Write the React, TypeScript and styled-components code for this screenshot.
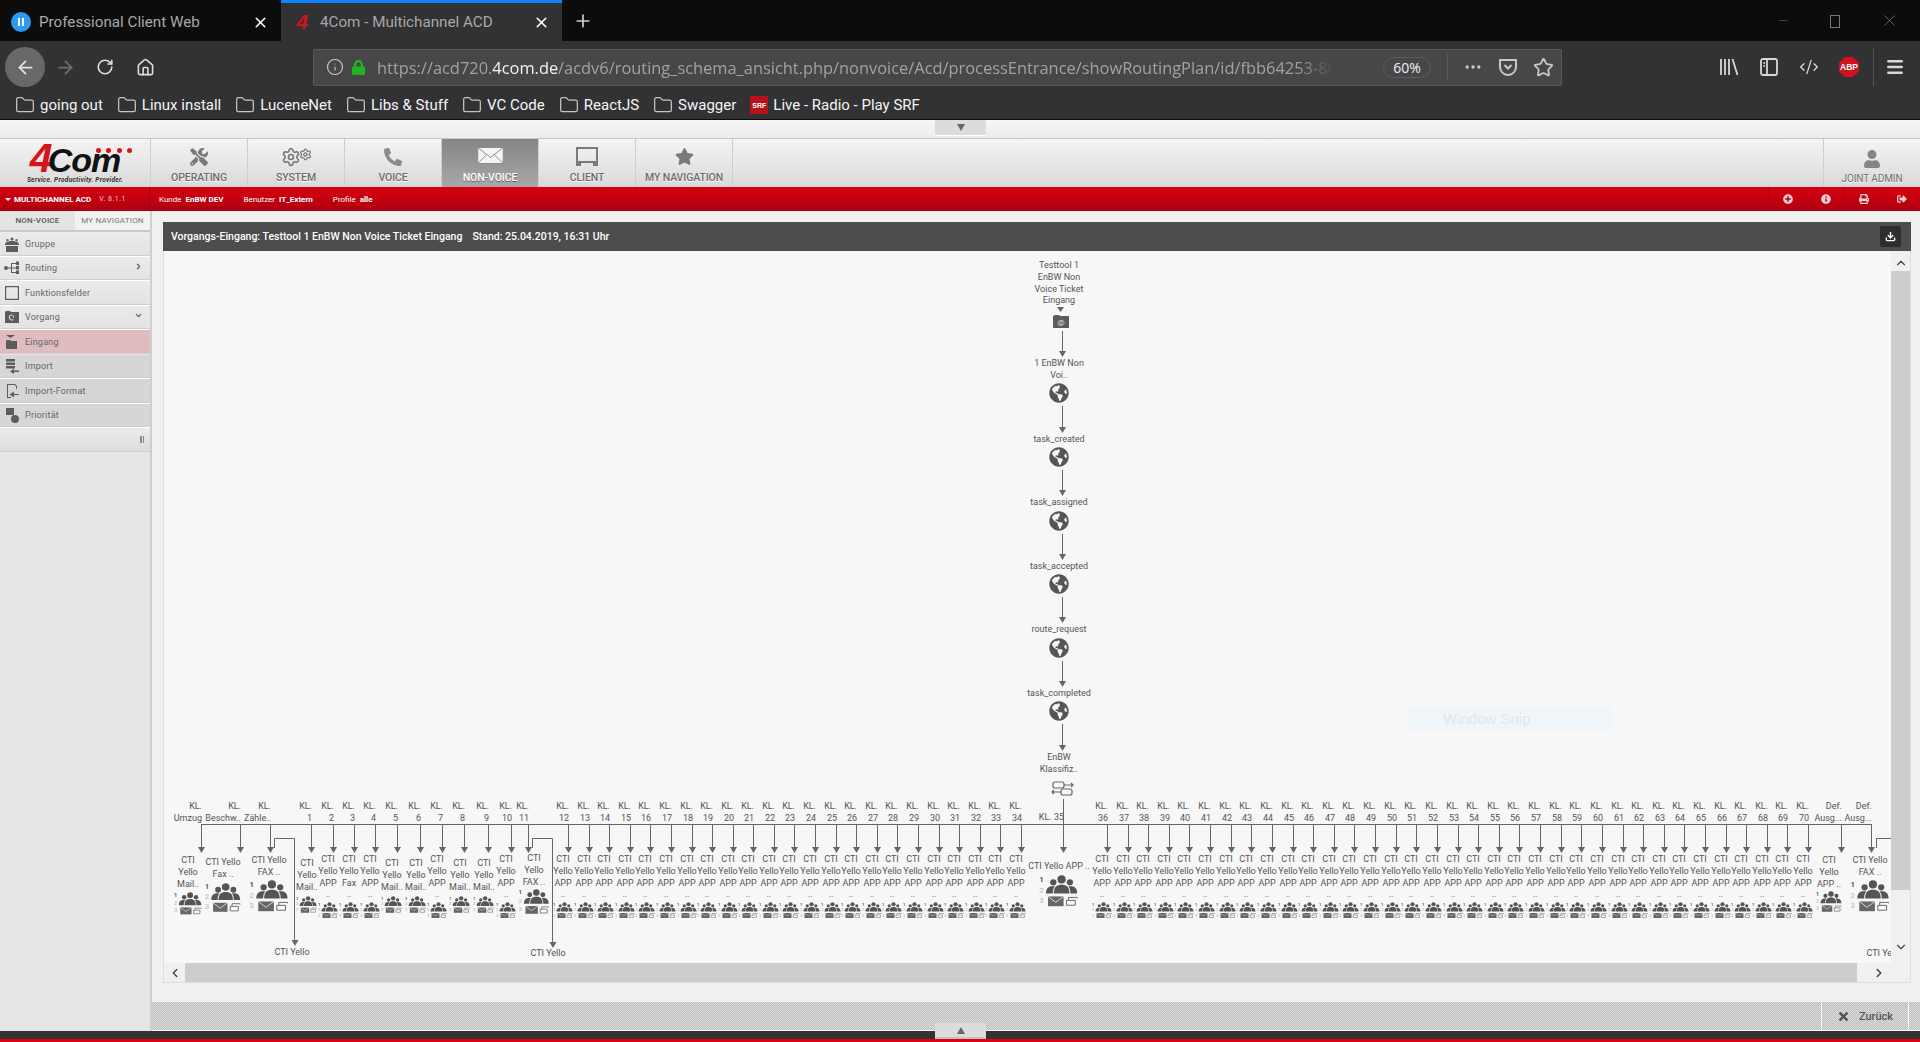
import React from "react";
import styled, { createGlobalStyle } from "styled-components";
import {
  ArrowLeft, ArrowRight, RotateCw, Home, Info, MoreHorizontal, Star, Code2, Menu, Plus, X, Folder,
  Minus, ChevronRight, ChevronLeft, ChevronDown, ChevronUp, Download, Settings,
} from "lucide-react";
import { FaGlobeAmericas, FaTools, FaPhoneAlt, FaStar, FaUser, FaTimes, FaLock, FaPlusCircle, FaInfoCircle, FaPrint, FaSignOutAlt } from "react-icons/fa";

const Global = createGlobalStyle`
  html, body { margin: 0; padding: 0; height: 100%; overflow: hidden; background: #f0f0f0; }
  * { box-sizing: border-box; }
  #root { height: 100%; }
`;

const Page = styled.div`
  width: 1920px; height: 1042px; display: flex; flex-direction: column; overflow: hidden;
  font-family: "Roboto", "Liberation Sans", sans-serif;
`;

/* ---------- browser chrome ---------- */
const TabStrip = styled.div`height: 41px; background: #0c0c0c; display: flex; align-items: stretch; position: relative; flex: none;`;
const Tab = styled.div<{ $active?: boolean }>`
  width: 281px; display: flex; align-items: center; padding-left: 11px; position: relative;
  font: 15.2px "Roboto", sans-serif; color: #a8a8a8; white-space: nowrap;
  background: ${p => (p.$active ? "#323234" : "transparent")};
  border-top: 3px solid ${p => (p.$active ? "#0a84ff" : "transparent")};
`;
const TabTitle = styled.span`margin-left: 8px; flex: 1;`;
const TabClose = styled(X)`color: #fff; margin-right: 12px; flex: none;`;
const Favicon = styled.span`
  width: 20px; height: 20px; border-radius: 50%; background: #2f9bf0; display: flex; align-items: center; justify-content: center; gap: 2px; flex: none;
`;
const PauseBar = styled.i`width: 2px; height: 8px; background: #fff; display: block;`;
const RedFour = styled.span`
  width: 20px; text-align: center; font: italic 900 21px "Liberation Sans", sans-serif; color: #d2141c; flex: none;
`;
const NewTab = styled.div`width: 42px; display: flex; align-items: center; justify-content: center; color: #cfcfcf;`;
const WindowControls = styled.div`margin-left: auto; display: flex; align-items: center; gap: 40px; padding-right: 21px; color: #777;`;
const Restore = styled.span`width: 10px; height: 13px; border: 1px solid #777; display: block; position: relative; top: 1px;`;

const Toolbar = styled.div`height: 52px; background: #323234; display: flex; align-items: center; padding-left: 5px; flex: none;`;
const BackBtn = styled.div`width: 40px; height: 40px; border-radius: 50%; background: #68686a; color: #e4e4e4; display: flex; align-items: center; justify-content: center;`;
const NavIcon = styled.div<{ $dim?: boolean }>`width: 40px; display: flex; align-items: center; justify-content: center; color: ${p => (p.$dim ? "#6e6e70" : "#dcdcdc")};`;
const UrlBar = styled.div`
  margin-left: 148px; width: 1249px; height: 37px; background: #474749; border: 1px solid #5a5a5c; border-radius: 2px;
  display: flex; align-items: center; padding-left: 12px; color: #c8c8c8; flex: none;
`;
const UrlText = styled.div`
  margin-left: 11px; width: 957px; overflow: hidden; white-space: nowrap; font: 16.4px "Open Sans", sans-serif; color: #a2a2a4;
  mask-image: linear-gradient(to right, #000 96%, transparent);
  b { font-weight: 400; color: #f2f2f2; }
`;
const Zoom = styled.div`
  margin-left: 49px; width: 48px; height: 21px; border: 1px solid #5c5c5e; border-radius: 11px; color: #f0f0f0;
  font: 14px "Open Sans", sans-serif; display: flex; align-items: center; justify-content: center;
`;
const UrlSep = styled.div`width: 1px; height: 26px; background: #5c5c5e; margin: 0 15px 0 16px;`;
const UrlIcons = styled.div`display: flex; align-items: center; gap: 15px; color: #c9c9c9;`;
const ToolRight = styled.div`margin-left: auto; display: flex; align-items: center; gap: 20px; padding-right: 15px; color: #d8d8d8;`;
const ToolSep = styled.div`width: 1px; height: 38px; background: #555; margin: 0 -9px 0 -6px;`;
const Abp = styled.div`
  width: 20px; height: 20px; background: #d1121c; color: #fff; font: 700 8.5px "Liberation Sans", sans-serif; display: flex; align-items: center; justify-content: center;
  clip-path: polygon(30% 0, 70% 0, 100% 30%, 100% 70%, 70% 100%, 30% 100%, 0 70%, 0 30%);
`;

const Bookmarks = styled.div`
  height: 27px; background: #323234; border-bottom: 1px solid #0c0c0c; display: flex; align-items: center; padding: 0 0 2px 15px; gap: 14px; flex: none;
`;
const Bookmark = styled.div`display: flex; align-items: center; gap: 5px; color: #f4f4f4; font: 15px "Roboto", sans-serif; white-space: nowrap;`;
const FolderIcon = styled(Folder)`color: #c4c4c4; flex: none;`;
const SrfMark = styled.span`width: 18px; height: 18px; background: #b5121b; color: #fff; font: 700 7px "Liberation Sans", sans-serif; display: flex; align-items: center; justify-content: center;`;

/* ---------- app header ---------- */
const TopStrip = styled.div`
  height: 19px; background: linear-gradient(#f6f6f6, #ececec); border-bottom: 1px solid #c8c8c8; position: relative; flex: none;
`;
const Handle = styled.div<{ $bottom?: boolean }>`
  position: absolute; left: 935px; width: 51px; height: 16px; background: #dcdcdc; display: flex; align-items: center; justify-content: center;
  ${p => (p.$bottom ? "top: -8px; border-bottom: 2px solid #c4c4c4;" : "top: 0; border-bottom: 1px solid #fff;")}
`;
const HandleMark = styled.span<{ $up?: boolean }>`
  width: 0; height: 0; border-left: 4px solid transparent; border-right: 4px solid transparent; display: block;
  ${p => (p.$up ? "border-bottom: 7px solid #666;" : "border-top: 7px solid #666;")}
`;

const NavBar = styled.div`height: 48px; display: flex; background: linear-gradient(#f4f4f4, #d9d9d9); flex: none;`;
const LogoCell = styled.div`width: 151px; border-right: 1px solid #cfcfcf; position: relative; display: flex; flex-direction: column; align-items: center; flex: none;`;
const LogoWord = styled.div`
  font: italic 900 34px/32px "Liberation Sans", sans-serif; color: #111; letter-spacing: -1px; margin-top: 3px; position: relative; white-space: nowrap;
  span { color: #d7141c; font-size: 41px; letter-spacing: -5px; }
`;
const LogoDots = styled.div`position: absolute; top: 6px; left: 66px; display: flex; gap: 5.5px;`;
const LogoDot = styled.i`width: 5px; height: 5px; border-radius: 50%; background: #d7141c; display: block;`;
const LogoTag = styled.div`font: italic 700 6.6px "Roboto", sans-serif; color: #333; letter-spacing: .25px; margin-top: 0;`;
const NavItem = styled.div<{ $active?: boolean }>`
  width: 97px; display: flex; flex-direction: column; align-items: center; justify-content: flex-end; padding-bottom: 3px; gap: 5px; flex: none;
  border-right: 1px solid #cfcfcf; color: ${p => (p.$active ? "#fff" : "#6c6c6c")};
  background: ${p => (p.$active ? "linear-gradient(#858585, #a8a8a8)" : "transparent")};
  font: 500 10.5px "Roboto", sans-serif; letter-spacing: -.1px; text-shadow: ${p => (p.$active ? "0 1px 0 #666" : "0 1px 0 #fff")};
`;
const GearPair = styled.div`display: flex; align-items: center; height: 18px; color: #7a7a7a; gap: 0;`;
const Spacer = styled.div`flex: 1;`;
const JointItem = styled(NavItem)`border-right: 0; border-left: 1px solid #cfcfcf; font-weight: 400; font-size: 10px;`;

const RedBar = styled.div`height: 24px; display: flex; align-items: center; background: linear-gradient(#d8000f, #ad0010); color: #fff; flex: none;`;
const AppTitle = styled.div`
  width: 150px; height: 100%; padding-left: 5px; display: flex; align-items: center; gap: 3px; border-right: 1px solid #a30010; flex: none;
  font: 700 8px "Roboto", sans-serif; white-space: nowrap;
  em { font-style: normal; font-weight: 400; margin-left: 5px; color: #f2c8cc; font-size: 7px; letter-spacing: .5px; }
`;
const Caret = styled.i`width: 0; height: 0; border-left: 3px solid transparent; border-right: 3px solid transparent; border-top: 3px solid #fff; display: block;`;
const MetaRow = styled.div`display: flex; gap: 20px; margin-left: 9px;`;
const Meta = styled.div`font: 400 8px "Roboto", sans-serif; white-space: nowrap; b { font-weight: 700; margin-left: 4px; }`;
const RedActions = styled.div`margin-left: auto; display: flex; height: 100%;`;
const RedAction = styled.div`width: 38px; display: flex; align-items: center; justify-content: center; border-left: 1px solid #b80010; color: #f0d0d0;`;

/* ---------- body ---------- */
const Body = styled.div`flex: 1; display: flex; min-height: 0;`;
const Sidebar = styled.aside`width: 152px; background: #e6e6e6; border-right: 2px solid #cfcfcf; flex: none;`;
const SideTabs = styled.div`display: flex; height: 21px; border-bottom: 2px solid #c9c9c9;`;
const SideTab = styled.div<{ $active?: boolean }>`
  width: 75px; display: flex; align-items: center; justify-content: center; font: ${p => (p.$active ? 500 : 400)} 8px "Roboto", sans-serif;
  color: ${p => (p.$active ? "#555" : "#777")}; background: ${p => (p.$active ? "#e4e4e4" : "#f2f2f2")}; letter-spacing: .2px;
`;
const SideItem = styled.div<{ $tone?: "pink" | "sub" }>`
  height: 24.5px; display: flex; align-items: center; padding-left: 4px; gap: 5px; position: relative;
  border-bottom: 1px solid #fff; border-bottom-color: ${p => (p.$tone === "pink" ? "#f0e4e6" : "#fff")};
  box-shadow: inset 0 -1px 0 #cfcfcf;
  background: ${p => (p.$tone === "pink" ? "#dfbcc0" : p.$tone === "sub" ? "#d6d6d6" : "linear-gradient(#ebebeb,#e2e2e2)")};
  font: 9px "Roboto", sans-serif; color: #666; letter-spacing: .2px;
`;
const SideIcon = styled.svg`width: 16px; height: 16px; flex: none; color: #5c5c5c;`;
const SideChevron = styled.span`position: absolute; right: 7px; top: 5px; color: #555; display: flex;`;
const Collapse = styled.div`
  height: 24px; background: linear-gradient(#ececec, #dcdcdc); border-bottom: 1px solid #cfcfcf; display: flex; align-items: center; justify-content: flex-end; padding-right: 6px; gap: 1px;
`;
const CollapseBar = styled.i`width: 1.5px; height: 7px; background: #888; display: block;`;

const Main = styled.main`flex: 1; display: flex; flex-direction: column; min-width: 0; background: #f0f0f0;`;
const Content = styled.div`flex: 1; min-height: 0; padding: 11px 9px 19px 11px; display: flex; flex-direction: column;`;
const PanelHeader = styled.div`
  height: 29px; background: #4d4d4d; color: #fff; display: flex; align-items: center; padding: 0 0 1px 8px; flex: none; font: 500 10.5px "Roboto", sans-serif; gap: 10px;
`;
const DownloadBtn = styled.div`margin-left: auto; margin-right: 10px; width: 21px; height: 21px; border-radius: 2px; background: #2e2e2e; color: #fff; display: flex; align-items: center; justify-content: center;`;
const Panel = styled.div`
  flex: 1; min-height: 0; display: grid; grid-template-columns: 1fr 19px 1px; grid-template-rows: 1fr 19px 1px; background: #f0f0f0; border-left: 1px solid #dedede;
`;
const Canvas = styled.div`position: relative; overflow: hidden; background: #f7f7f7; font: 9px/11.8px "Roboto", sans-serif; color: #555;`;
const VScroll = styled.div`background: #f0f0f0; display: flex; flex-direction: column; align-items: center; color: #444; overflow: hidden;`;
const VThumb = styled.div`width: 19px; height: 619px; background: #cdcdcd; margin: 1px 0 50px; flex: none;`;
const HScroll = styled.div`grid-column: 1 / 3; display: flex; align-items: center; background: #f0f0f0; color: #444;`;
const HThumb = styled.div`height: 100%; width: 1672px; background: #cdcdcd;`;
const ArrowCell = styled.div<{ $w: number }>`width: ${p => p.$w}px; display: flex; justify-content: center; flex: none;`;
const PanelFoot = styled.div`grid-column: 1 / 4; background: #dedede;`;
const EdgeV = styled.div`grid-row: 1 / 3; grid-column: 3; background: #dedede;`;

const Footer = styled.div`
  height: 29px; flex: none; display: flex; justify-content: flex-end; border-bottom: 1px solid #fff;
  background: repeating-conic-gradient(#bdbdbd 0 25%, #dcdcdc 0 50%) 0 0 / 2px 2px;
`;
const BackButton = styled.div`
  width: 88px; margin-right: 11px; border-left: 1px solid #fff; border-right: 1px solid #fff; display: flex; align-items: center; justify-content: center; gap: 9px;
  font: 500 11px "Roboto", sans-serif; color: #555;
`;
const BottomBar = styled.div`height: 8px; background: #333; position: relative; flex: none;`;
const RedLine = styled.div`height: 3px; flex: none; background: #e00010;`;

/* ---------- diagram ---------- */
const Wires = styled.svg`position: absolute; left: 0; top: 0; width: 1727px; height: 711px;`;
const Node = styled.div`position: absolute; transform: translateX(-50%); display: flex; flex-direction: column; align-items: center; white-space: nowrap; text-align: center;`;
const KlLabel = styled.div`position: absolute; transform: translateX(-100%); text-align: right; white-space: nowrap;`;
const Snip = styled.div`
  position: absolute; left: 1245px; top: 456px; width: 202px; height: 23px; padding-left: 34px; background: #f0f5fa; color: #e0e7ee; font: 15px/24px "Liberation Sans", sans-serif;
`;
const FlowGlobe = styled(FaGlobeAmericas)`color: #555; display: block;`;

const OX = 163, OY = 251;

const Group: React.FC<{ w: number; mt?: number }> = ({ w, mt = 0 }) => (
  <svg width={w} height={w * 0.825} viewBox="0 0 40 33" style={{ marginTop: mt, display: "block", flex: "none" }}>
    <text x="0" y="7" fontSize="8" fontWeight="700" fontFamily="Roboto" fill="#555">1</text>
    <text x="0" y="18" fontSize="8" fontWeight="700" fontFamily="Roboto" fill="#c8c8c8">2</text>
    <text x="0" y="29" fontSize="8" fontWeight="700" fontFamily="Roboto" fill="#c8c8c8">3</text>
    <g fill="#555">
      <circle cx="23" cy="4.5" r="4.2" /><path d="M15 19c0-7 3-9 8-9s8 2 8 9z" />
      <circle cx="14.5" cy="7.5" r="3.2" /><path d="M7 19c0-6 3-7.5 7-7.5 1 0 2 .2 2 .2-1.5 2-2 4-2 7.300z" />
      <circle cx="31.500" cy="7.5" r="3.2" /><path d="M39 19c0-6-3-7.5-7-7.5-1 0-2 .2-2 .2 1.500 2 2 4 2 7.300z" />
    </g>
    <rect x="9" y="22" width="16" height="10" fill="#666" />
    <path d="M9 22l8 6 8-6" fill="none" stroke="#f7f7f7" strokeWidth=".8" />
    <path d="M28 26h9v5h-9zM30 26v-3h6l3 0v1" fill="none" stroke="#666" strokeWidth="1" />
  </svg>
);

const Arrow: React.FC<{ x: number; tip: number; w?: number }> = ({ x, tip, w = 3.500 }) => (
  <path d={`M${x - OX - w} ${tip - OY - 6}h${w * 2}l-${w} 6z`} fill="#666" />
);
const V: React.FC<{ x: number; y1: number; y2: number }> = ({ x, y1, y2 }) => (
  <line x1={x - OX + 0.5} x2={x - OX + 0.5} y1={y1 - OY} y2={y2 - OY} stroke="#666" />
);

type Col = { drop: number; kl: string[]; cx: number; top: number; lines: string[]; icon: number; gap?: number };
const app = (drop: number, n: number, last = "APP"): Col => ({ drop, kl: ["KL.", String(n)], cx: drop - 5, top: 854, lines: ["CTI", "Yello", last, ".."], icon: 20, gap: 1 });
const mail = (drop: number, n: number, cx: number): Col => ({ drop, kl: ["KL.", String(n)], cx, top: 858, lines: ["CTI", "Yello", "Mail.."], icon: 21, gap: 3 });

const cols: Col[] = [
  { drop: 200, kl: ["KL.", "Umzug"], cx: 187, top: 855, lines: ["CTI", "Yello", "Mail.."], icon: 28, gap: 2 },
  { drop: 239, kl: ["KL.", "Beschw.."], cx: 222, top: 857, lines: ["CTI Yello", "Fax .."], icon: 36, gap: 2 },
  { drop: 269, kl: ["KL.", "Zähle.."], cx: 268, top: 855, lines: ["CTI Yello", "FAX .."], icon: 39, gap: 1 },
  mail(310, 1, 306), app(332, 2), app(353, 3, "Fax"), app(374, 4), mail(396, 5, 391), mail(419, 6, 415), app(441, 7), mail(463, 8, 459), mail(487, 9, 483), app(510, 10),
  { drop: 527, kl: ["KL.", "11"], cx: 533, top: 853, lines: ["CTI", "Yello", "FAX .."], icon: 31, gap: 1 },
];
for (let i = 12; i <= 34; i++) cols.push(app(Math.round(567 + (i - 12) * 20.59), i));
cols.push({ drop: 1062, kl: ["KL. 35"], cx: 1058, top: 861, lines: ["CTI Yello APP .."], icon: 39, gap: 2 });
for (let i = 36; i <= 70; i++) cols.push(app(Math.round(1106 + (i - 36) * 20.62), i));
cols.push({ drop: 1840, kl: ["Def.", "Ausg..."], cx: 1828, top: 855, lines: ["CTI", "Yello", "APP .."], icon: 26, gap: 1 });
cols.push({ drop: 1870, kl: ["Def.", "Ausg..."], cx: 1869, top: 855, lines: ["CTI Yello", "FAX .."], icon: 39, gap: 1 });

const flow = [
  { label: ["1 EnBW Non", "Voi.."], y: 358, globe: 393 },
  { label: ["task_created"], y: 434, globe: 457 },
  { label: ["task_assigned"], y: 497, globe: 521 },
  { label: ["task_accepted"], y: 561, globe: 584 },
  { label: ["route_request"], y: 624, globe: 648 },
  { label: ["task_completed"], y: 688, globe: 711 },
];

const Diagram: React.FC = () => (
  <Canvas>
    <Wires viewBox="0 0 1727 711">
      <path d={`M${1056 - OX} ${307 - OY}h7l-3.500 5z`} fill="#666" />
      <V x={1061} y1={331} y2={352} /><Arrow x={1061.5} tip={357} />
      {flow.slice(1).map((f, i) => (
        <g key={f.y}><V x={1061} y1={flow[i].globe + 13} y2={f.y - 6} /><Arrow x={1061.5} tip={f.y - 1} /></g>
      ))}
      <V x={1061} y1={724} y2={746} /><Arrow x={1061.5} tip={751} />
      <V x={1062} y1={799} y2={848} />
      <line x1={200 - OX} x2={1870 - OX + 1} y1={824.5 - OY} y2={824.5 - OY} stroke="#666" />
      {cols.map(c => (
        <g key={c.drop}><V x={c.drop} y1={824} y2={848} /><Arrow x={c.drop + 0.5} tip={853} /></g>
      ))}
      <path d={`M${273.500 - OX} ${848 - OY}V${838.500 - OY}H${293.500 - OX}V${942 - OY}`} fill="none" stroke="#666" />
      <Arrow x={294} tip={946} />
      <path d={`M${531.500 - OX} ${848 - OY}V${838.500 - OY}H${551.500 - OX}V${944 - OY}`} fill="none" stroke="#666" />
      <Arrow x={552} tip={948} />
      <path d={`M${1875.500 - OX} ${848 - OY}V${838.500 - OY}H${1895 - OX}`} fill="none" stroke="#666" />
      <g fill="none" stroke="#666" strokeWidth="1.2">
        <rect x={1052 - OX} y={782 - OY} width="11" height="6" rx="2" /><path d={`M${1063 - OX} ${785 - OY}h9m-2-2l2 2-2 2`} />
        <rect x={1060 - OX} y={789 - OY} width="11" height="6" rx="2" /><path d={`M${1060 - OX} ${792 - OY}h-9m2-2l-2 2 2 2`} />
      </g>
      <g>
        <path d={`M${1052 - OX} ${328 - OY}v-12l2-1h4l1 1h9v12z`} fill="#5c5c5c" />
        <text x={1060 - OX} y={325 - OY} textAnchor="middle" fontSize="8" fill="#ddd" fontFamily="Roboto">@</text>
      </g>
    </Wires>

    <Node style={{ left: 1058 - OX, top: 260 - OY }}>
      <span>Testtool 1</span><span>EnBW Non</span><span>Voice Ticket</span><span>Eingang</span>
    </Node>
    {flow.map(f => (
      <React.Fragment key={f.y}>
        <Node style={{ left: 1058 - OX, top: f.y - OY }}>{f.label.map(l => <span key={l}>{l}</span>)}</Node>
        <Node style={{ left: 1058 - OX, top: f.globe - 10 - OY }}><FlowGlobe size={20} /></Node>
      </React.Fragment>
    ))}
    <Node style={{ left: 1058 - OX, top: 752 - OY }}><span>EnBW</span><span>Klassifiz..</span></Node>

    {cols.map(c => (
      <React.Fragment key={c.drop}>
        <KlLabel style={{ left: c.drop + 1 - OX, top: (c.kl.length === 1 ? 812 : 801) - OY }}>
          {c.kl.map(k => <div key={k}>{k}</div>)}
        </KlLabel>
        <Node style={{ left: c.cx - OX, top: c.top - OY }}>
          {c.lines.map((l, i) => <span key={i}>{l}</span>)}
          <Group w={c.icon} mt={c.gap} />
        </Node>
      </React.Fragment>
    ))}
    <Node style={{ left: 291 - OX, top: 947 - OY }}><span>CTI Yello</span><span>..</span></Node>
    <Node style={{ left: 547 - OX, top: 948 - OY }}><span>CTI Yello</span></Node>
    <Node style={{ left: 1883 - OX, top: 948 - OY }}><span>CTI Yello</span></Node>
    <Snip>Window Snip</Snip>
  </Canvas>
);

const side = [
  { t: "Gruppe", d: "M8 1.500a1.500 1.500 0 1 1 0 3 1.500 1.500 0 0 1 0-3zM3.500 3a1.200 1.200 0 1 1 0 2.400 1.200 1.200 0 0 1 0-2.400zM12.500 3a1.200 1.200 0 1 1 0 2.400 1.200 1.200 0 0 1 0-2.400zM1 9c0-3 2-3 3-3l2-1h4l2 1c1 0 3 0 3 3zM2 10h12v6H2z" },
  { t: "Routing", d: "M0 8a2 2 0 0 1 4 0 2 2 0 0 1-4 0zM4 7.500h3V3h5V1.500h3v3.500h-3V4H8v3.500h4V6h3v3.500h-3V8.500H8V12h4v-1.500h3V14h-3v-1H7V8.500H4z" },
  { t: "Funktionsfelder", d: "M1 1h14v14H1zM2.200 2.200v11.600h11.600V2.200z" },
  { t: "Vorgang", d: "M1 14V3l1-1h4l1 1h8v11zM8 5.500a3 3 0 1 0 1.500 5.500l-.5-.8a2 2 0 1 1 1-1.700v.5h-1V6.800h1z" },
  { t: "Eingang", d: "M2 1h9L6.500 4zM2 15V7l1-1h3l1 1h6v8z", tone: "pink" },
  { t: "Import", d: "M2 1h9v2.500H2zM2 4.500h9V7H2zM2 8h9v2.500H2zM15 12.500H10v-2l-4 3 4 2.500v-2h5z", tone: "sub" },
  { t: "Import-Format", d: "M3 1h8l2 2v3h-1V3.500L10.500 2H4v12h3v1H3zM15 11H10V8.500L5.500 11.500 10 14.500V12h5z", tone: "sub" },
  { t: "Priorität", d: "M2 1h8v7H2zM11 8a4 4 0 1 1 0 8 4 4 0 0 1 0-8z", tone: "sub" },
] as const;

export default function App() {
  return (
    <Page>
      <Global />
      <TabStrip>
        <Tab>
          <Favicon><PauseBar /><PauseBar /></Favicon>
          <TabTitle>Professional Client Web</TabTitle>
          <TabClose size={17} strokeWidth={2.2} />
        </Tab>
        <Tab $active>
          <RedFour>4</RedFour>
          <TabTitle>4Com - Multichannel ACD</TabTitle>
          <TabClose size={17} strokeWidth={2.2} />
        </Tab>
        <NewTab><Plus size={20} /></NewTab>
        <WindowControls>
          <Minus size={13} strokeWidth={1} />
          <Restore />
          <X size={19} strokeWidth={1} />
        </WindowControls>
      </TabStrip>

      <Toolbar>
        <BackBtn><ArrowLeft size={21} /></BackBtn>
        <NavIcon $dim><ArrowRight size={21} /></NavIcon>
        <NavIcon><RotateCw size={18} strokeWidth={2.2} /></NavIcon>
        <NavIcon><Home size={19} /></NavIcon>
        <UrlBar>
          <Info size={18} strokeWidth={1.5} />
          <FaLock size={15} color="#22b222" style={{ marginLeft: 7 }} />
          <UrlText>https://acd720.<b>4com.de</b>/acdv6/routing_schema_ansicht.php/nonvoice/Acd/processEntrance/showRoutingPlan/id/fbb64253-80</UrlText>
          <Zoom>60%</Zoom>
          <UrlSep />
          <UrlIcons>
            <MoreHorizontal size={20} />
            <svg width="20" height="20" viewBox="0 0 20 20" fill="none" stroke="currentColor" strokeWidth="2"><path d="M2 3h16v7a8 8 0 0 1-16 0z" /><path d="M6.500 8l3.500 3.500L13.500 8" /></svg>
            <Star size={21} />
          </UrlIcons>
        </UrlBar>
        <ToolRight>
          <svg width="20" height="20" viewBox="0 0 20 20" fill="none" stroke="currentColor" strokeWidth="1.800"><path d="M2 2v16M6 2v16M10 2v16M13.500 2l5 16" /></svg>
          <svg width="20" height="20" viewBox="0 0 20 20" fill="none" stroke="currentColor" strokeWidth="1.800"><rect x="2" y="2" width="16" height="16" rx="2" /><path d="M8 2v16M4.500 6h1.500M4.500 9h1.500" /></svg>
          <Code2 size={20} strokeWidth={1.6} />
          <Abp>ABP</Abp>
          <ToolSep />
          <Menu size={20} strokeWidth={3} />
        </ToolRight>
      </Toolbar>

      <Bookmarks>
        {["going out", "Linux install", "LuceneNet", "Libs & Stuff", "VC Code", "ReactJS", "Swagger"].map(b => (
          <Bookmark key={b}><FolderIcon size={20} strokeWidth={1.5} />{b}</Bookmark>
        ))}
        <Bookmark><SrfMark>SRF</SrfMark>Live - Radio - Play SRF</Bookmark>
      </Bookmarks>

      <TopStrip><Handle><HandleMark /></Handle></TopStrip>

      <NavBar>
        <LogoCell>
          <LogoWord><span>4</span>Com<LogoDots><LogoDot /><LogoDot /><LogoDot /><LogoDot /></LogoDots></LogoWord>
          <LogoTag>Service. Productivity. Provider.</LogoTag>
        </LogoCell>
        <NavItem><FaTools size={18} color="#7a7a7a" />OPERATING</NavItem>
        <NavItem>
          <GearPair><Settings size={20} strokeWidth={2} /><Settings size={13} strokeWidth={2.4} style={{ marginLeft: -2, marginTop: -6 }} /></GearPair>
          SYSTEM
        </NavItem>
        <NavItem><FaPhoneAlt size={18} color="#8a8a8a" />VOICE</NavItem>
        <NavItem $active>
          <svg width="27" height="17" viewBox="0 0 28 18" fill="#f4f4f4" stroke="#8a8a8a" strokeWidth="1" style={{ marginBottom: 2 }}><rect x=".5" y=".5" width="27" height="17" /><path d="M1 1l13 10L27 1M1 17l9-9M27 17l-9-9" fill="none" /></svg>
          NON-VOICE
        </NavItem>
        <NavItem>
          <svg width="22" height="19" viewBox="0 0 22 19" fill="none" stroke="#7a7a7a" strokeWidth="2"><path d="M1 1h20v14H1z" /><path d="M1 15v3h3v-2M21 15v3h-3v-2" fill="#7a7a7a" /></svg>
          CLIENT
        </NavItem>
        <NavItem><FaStar size={19} color="#7a7a7a" />MY NAVIGATION</NavItem>
        <Spacer />
        <JointItem><FaUser size={18} color="#858585" />JOINT ADMIN</JointItem>
      </NavBar>

      <RedBar>
        <AppTitle><Caret />MULTICHANNEL ACD<em>V. 8.1.1</em></AppTitle>
        <MetaRow>
          <Meta>Kunde<b>EnBW DEV</b></Meta>
          <Meta>Benutzer<b>IT_Extern</b></Meta>
          <Meta>Profile<b>alle</b></Meta>
        </MetaRow>
        <RedActions>
          <RedAction><FaPlusCircle size={10} /></RedAction>
          <RedAction><FaInfoCircle size={10} /></RedAction>
          <RedAction><FaPrint size={10} /></RedAction>
          <RedAction><FaSignOutAlt size={10} /></RedAction>
        </RedActions>
      </RedBar>

      <Body>
        <Sidebar>
          <SideTabs><SideTab $active>NON-VOICE</SideTab><SideTab>MY NAVIGATION</SideTab></SideTabs>
          {side.map(s => (
            <SideItem key={s.t} $tone={"tone" in s ? s.tone : undefined}>
              <SideIcon viewBox="0 0 16 16"><path d={s.d} fill="currentColor" fillRule="evenodd" /></SideIcon>
              {s.t}
              {s.t === "Routing" && <SideChevron><ChevronRight size={9} strokeWidth={3} /></SideChevron>}
              {s.t === "Vorgang" && <SideChevron><ChevronDown size={9} strokeWidth={3} /></SideChevron>}
            </SideItem>
          ))}
          <Collapse><CollapseBar /><CollapseBar /></Collapse>
        </Sidebar>

        <Main>
          <Content>
            <PanelHeader>
              <span>Vorgangs-Eingang: Testtool 1 EnBW Non Voice Ticket Eingang</span>
              <span>Stand: 25.04.2019, 16:31 Uhr</span>
              <DownloadBtn><Download size={11} strokeWidth={3} /></DownloadBtn>
            </PanelHeader>
            <Panel>
              <Diagram />
              <VScroll>
                <ChevronUp size={14} style={{ marginTop: 5, flex: "none" }} />
                <VThumb />
                <ChevronDown size={14} style={{ flex: "none" }} />
              </VScroll>
              <EdgeV />
              <HScroll>
                <ArrowCell $w={21}><ChevronLeft size={14} strokeWidth={2.5} /></ArrowCell>
                <HThumb />
                <ArrowCell $w={44}><ChevronRight size={14} strokeWidth={2.5} /></ArrowCell>
              </HScroll>
              <PanelFoot />
            </Panel>
          </Content>
          <Footer>
            <BackButton><FaTimes size={13} color="#555" />Zurück</BackButton>
          </Footer>
        </Main>
      </Body>

      <BottomBar><Handle $bottom><HandleMark $up /></Handle></BottomBar>
      <RedLine />
    </Page>
  );
}
